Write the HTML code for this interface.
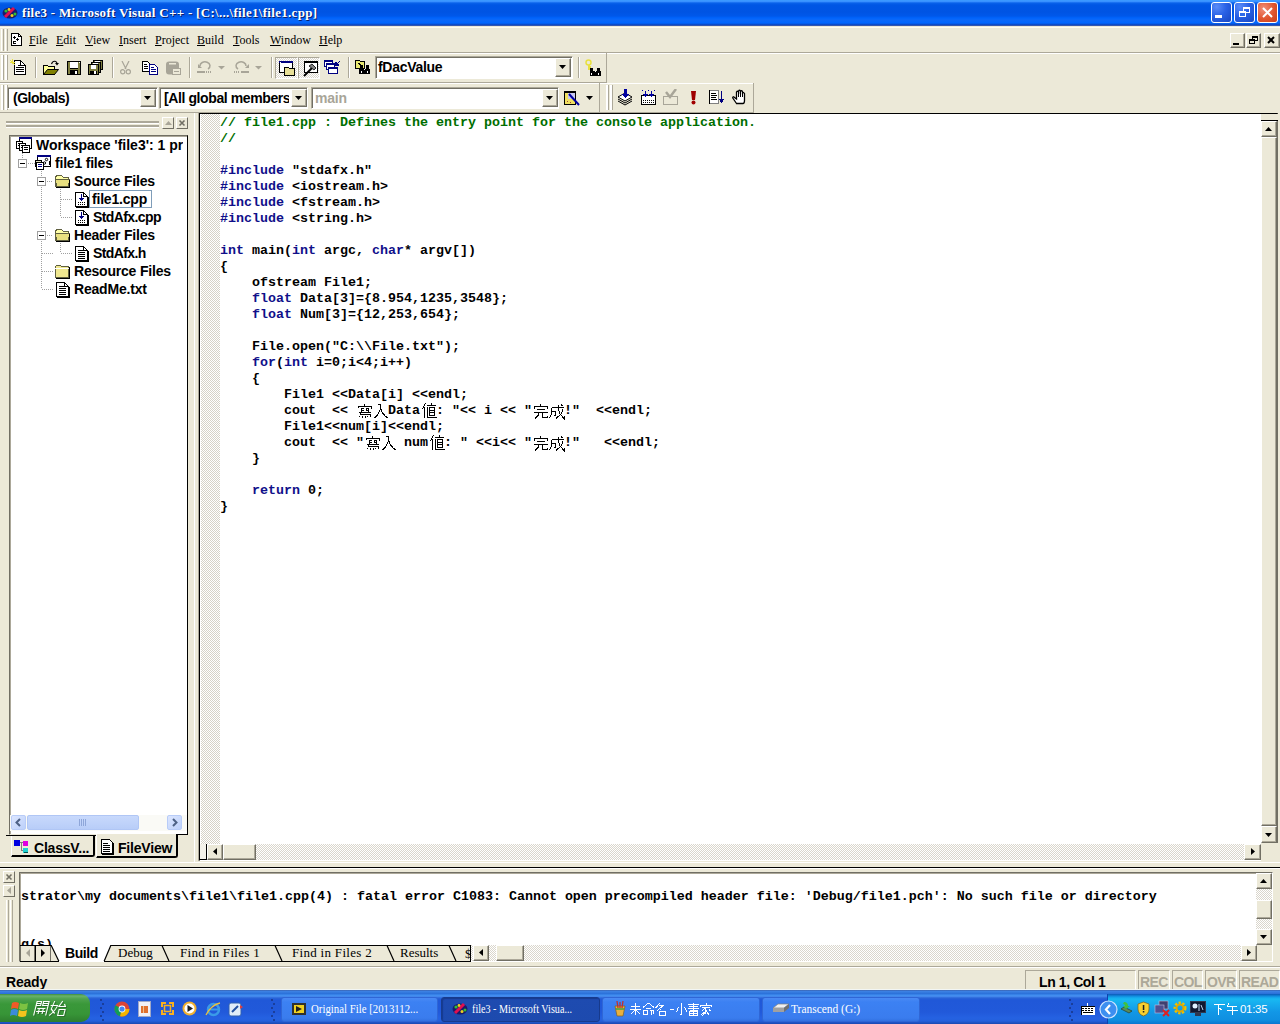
<!DOCTYPE html>
<html><head><meta charset="utf-8">
<style>
*{margin:0;padding:0;box-sizing:border-box}
html,body{width:1280px;height:1024px;overflow:hidden;background:#ECE9D8;font-family:"Liberation Sans",sans-serif}
.a{position:absolute}
.hatchm{background:repeating-conic-gradient(#D6D2C6 0 25%,#fff 0 50%) 0 0/2px 2px}
.hatch{background:repeating-conic-gradient(#DAD6CC 0 25%,#fff 0 50%) 0 0/2px 2px}
.btn3d{background:#ECE9D8;border-style:solid;border-width:1px;border-color:#fff #716F64 #716F64 #fff;box-shadow:inset -1px -1px 0 #ACA899}
.sunk{border-style:solid;border-width:1px;border-color:#ACA899 #fff #fff #ACA899;box-shadow:inset 1px 1px 0 #716F64}
.code{font-family:"Liberation Mono",monospace;font-weight:bold;font-size:13.33px;line-height:16px;white-space:pre;color:#000}
.kw{color:#10108a}
.cm{color:#006e00}
.serif{font-family:"Liberation Serif",serif}
.tb{font-family:"Liberation Sans",sans-serif;font-weight:bold;font-size:14px;white-space:pre}
</style></head><body>

<!-- TITLE BAR -->
<div class="a" style="left:0;top:0;width:1280px;height:26px;background:linear-gradient(#3D9CFF 0,#3890FF 1.5px,#0A62EA 3px,#0056E4 5px,#0054E3 12px,#0058EA 16px,#0064FC 18px,#0C68F8 20px,#0066FF 23px,#0F44B8 25px,#5A6AA8 26px)"></div>
<div class="a" style="left:0;top:26px;width:1280px;height:1px;background:#A0A4B8"></div>
<svg class="a" style="left:2px;top:6px" width="16" height="14" viewBox="0 0 16 14">
<ellipse cx="8" cy="7" rx="7.5" ry="5.5" fill="#1a1a6a"/>
<path d="M3 11 L12 2" stroke="#e01050" stroke-width="3"/>
<circle cx="4" cy="5" r="1.6" fill="#30c030"/><circle cx="7" cy="3.5" r="1.4" fill="#f0d020"/>
<circle cx="10" cy="9.5" r="1.5" fill="#f0d020"/><circle cx="13" cy="8" r="1.5" fill="#30c030"/>
</svg>
<div class="a serif" style="left:22px;top:5px;font-size:13px;line-height:16px;font-weight:bold;color:#fff;white-space:pre;letter-spacing:0.3px;text-shadow:1px 1px 0 #0A1E6A">file3 - Microsoft Visual C++ - [C:\...\file1\file1.cpp]</div>
<div class="a" style="left:1211px;top:2px;width:21px;height:21px;border:1px solid #fff;border-radius:3px;background:radial-gradient(circle at 25% 20%,#5A8CF8,#2A62E6 45%,#1B4BC8 90%)"></div>
<div class="a" style="left:1215px;top:15px;width:7px;height:3px;background:#fff"></div>
<div class="a" style="left:1234px;top:2px;width:21px;height:21px;border:1px solid #fff;border-radius:3px;background:radial-gradient(circle at 25% 20%,#5A8CF8,#2A62E6 45%,#1B4BC8 90%)"></div>
<div class="a" style="left:1243px;top:7px;width:7px;height:6px;border:1px solid #fff;border-top-width:2px"></div>
<div class="a" style="left:1239px;top:11px;width:7px;height:6px;border:1px solid #fff;border-top-width:2px;background:#2F6BEA"></div>
<div class="a" style="left:1257px;top:2px;width:21px;height:21px;border:1px solid #fff;border-radius:3px;background:radial-gradient(circle at 30% 30%,#F0907A,#E0552E 55%,#C8401A)"></div>
<svg class="a" style="left:1257px;top:2px" width="21" height="21"><path d="M6 6 L15 15 M15 6 L6 15" stroke="#fff" stroke-width="2"/></svg>

<!-- MENU BAR -->
<div class="a" style="left:0;top:26px;width:1280px;height:26px;background:#ECE9D8"></div>
<div class="a" style="left:0;top:27px;width:1280px;height:1px;background:#FFFCF0"></div>
<div class="a" style="left:0;top:52px;width:1280px;height:1px;background:#ACA899"></div>
<div class="a" style="left:1px;top:29px;width:3px;height:22px;border-left:1px solid #fff;border-right:1px solid #ACA899"></div>
<div class="a" style="left:5px;top:29px;width:3px;height:22px;border-left:1px solid #fff;border-right:1px solid #ACA899"></div>
<svg class="a" style="left:11px;top:33px" width="12" height="13" viewBox="0 0 12 13" shape-rendering="crispEdges">
<path d="M0.5 0.5 H7.5 L10.5 3.5 V12.5 H0.5 Z" fill="#fff" stroke="#000"/>
<path d="M7.5 0.5 V3.5 H10.5" fill="none" stroke="#000"/>
<rect x="3" y="3" width="1" height="3" fill="#000"/><rect x="2" y="4" width="3" height="1" fill="#000"/>
<rect x="6" y="5" width="1" height="3" fill="#000"/><rect x="5" y="6" width="3" height="1" fill="#000"/>
<rect x="2" y="8" width="3" height="1" fill="#000"/><rect x="2" y="8" width="1" height="3" fill="#000"/><rect x="2" y="10" width="3" height="1" fill="#000"/>
</svg>
<div class="a serif" style="top:32px;font-size:12px;line-height:16px;color:#000;white-space:pre;left:0">
<span class="a" style="top:0;left:29px"><u>F</u>ile</span><span class="a" style="top:0;left:56px"><u>E</u>dit</span><span class="a" style="top:0;left:85px"><u>V</u>iew</span><span class="a" style="top:0;left:119px"><u>I</u>nsert</span><span class="a" style="top:0;left:155px"><u>P</u>roject</span><span class="a" style="top:0;left:197px"><u>B</u>uild</span><span class="a" style="top:0;left:233px"><u>T</u>ools</span><span class="a" style="top:0;left:270px"><u>W</u>indow</span><span class="a" style="top:0;left:319px"><u>H</u>elp</span>
</div>
<div class="a btn3d" style="left:1230px;top:33px;width:15px;height:15px"></div>
<div class="a" style="left:1233px;top:43px;width:6px;height:2px;background:#000"></div>
<div class="a btn3d" style="left:1246px;top:33px;width:15px;height:15px"></div>
<div class="a" style="left:1252px;top:36px;width:6px;height:5px;border:1px solid #000;border-top-width:2px"></div>
<div class="a" style="left:1249px;top:39px;width:6px;height:5px;border:1px solid #000;border-top-width:2px;background:#ECE9D8"></div>
<div class="a btn3d" style="left:1264px;top:33px;width:16px;height:15px"></div>
<svg class="a" style="left:1264px;top:33px" width="16" height="15"><path d="M4 4 L10 10 M10 4 L4 10" stroke="#000" stroke-width="2"/></svg>

<!-- TOOLBARS -->
<div class="a" style="left:0;top:53px;width:1280px;height:60px;background:#ECE9D8"></div>
<div class="a" style="left:0;top:53px;width:1280px;height:1px;background:#fff"></div>
<div class="a" style="left:0;top:82px;width:607px;height:1px;background:#ACA899"></div>
<div class="a" style="left:0;top:83px;width:753px;height:1px;background:#fff"></div>
<div class="a" style="left:0;top:112px;width:754px;height:1px;background:#ACA899"></div>
<!-- TB1 -->
<div class="a" style="left:606px;top:53px;width:1px;height:30px;background:#ACA899"></div>
<div class="a" style="left:1px;top:55px;width:3px;height:25px;border-left:2px solid #fff;border-right:1px solid #ACA899"></div>
<div class="a" style="left:5px;top:55px;width:3px;height:25px;border-left:2px solid #fff;border-right:1px solid #ACA899"></div>
<div class="a" style="left:35px;top:57px;width:2px;height:21px;border-left:1px solid #ACA899;border-right:1px solid #fff"></div>
<div class="a" style="left:112px;top:57px;width:2px;height:21px;border-left:1px solid #ACA899;border-right:1px solid #fff"></div>
<div class="a" style="left:189px;top:57px;width:2px;height:21px;border-left:1px solid #ACA899;border-right:1px solid #fff"></div>
<div class="a" style="left:271px;top:57px;width:2px;height:21px;border-left:1px solid #ACA899;border-right:1px solid #fff"></div>
<div class="a" style="left:348px;top:57px;width:2px;height:21px;border-left:1px solid #ACA899;border-right:1px solid #fff"></div>
<div class="a" style="left:578px;top:57px;width:2px;height:21px;border-left:1px solid #ACA899;border-right:1px solid #fff"></div>
<!-- new -->
<svg class="a" style="left:9px;top:58px" width="18" height="18" viewBox="0 0 18 18" shape-rendering="crispEdges">
<path d="M5.5 2.5 H11.5 L16.5 7.5 V16.5 H5.5 Z" fill="#fff" stroke="#000"/>
<path d="M11.5 2.5 V7.5 H16.5" fill="none" stroke="#000"/>
<rect x="7" y="9" width="8" height="1" fill="#000"/><rect x="7" y="11" width="8" height="1" fill="#000"/><rect x="7" y="13" width="8" height="1" fill="#000"/><rect x="9" y="7" width="2" height="1" fill="#000"/>
<path d="M1 2 L6 7 M3 1 L4 6 M1 5 L6 4" stroke="#E8E040" stroke-width="1"/>
</svg>
<!-- open -->
<svg class="a" style="left:43px;top:60px" width="16" height="16" viewBox="0 0 16 16" shape-rendering="crispEdges">
<path d="M0.5 14.5 V5.5 H4.5 L5.5 6.5 H11.5 V9.5" fill="#FFFF99" stroke="#000"/>
<path d="M0.5 14.5 L4.5 9.5 H15.5 L11.5 14.5 Z" fill="#808000" stroke="#000" shape-rendering="auto"/>
<rect x="0" y="14" width="12" height="1" fill="#000"/>
<path d="M8.5 4 Q9.5 1 12 1.2 Q13.5 1.5 14 3" fill="none" stroke="#000" stroke-width="1.1" shape-rendering="auto"/><path d="M12 3 H16 L14 5.5 Z" fill="#000" shape-rendering="auto"/>
</svg>
<!-- save -->
<svg class="a" style="left:67px;top:61px" width="14" height="14" viewBox="0 0 14 14" shape-rendering="crispEdges">
<rect x="0.5" y="0.5" width="13" height="13" fill="#808040" stroke="#000"/>
<rect x="3" y="1" width="8" height="6" fill="#fff"/><rect x="3" y="7" width="8" height="1" fill="#000"/>
<rect x="3" y="9" width="8" height="5" fill="#000"/><rect x="8" y="10" width="2" height="3" fill="#fff"/><rect x="12" y="1" width="1" height="1" fill="#fff"/>
</svg>
<!-- save all -->
<svg class="a" style="left:88px;top:60px" width="16" height="16" viewBox="0 0 16 16" shape-rendering="crispEdges">
<rect x="5.5" y="0.5" width="9" height="9" fill="#808040" stroke="#000"/><rect x="7" y="1" width="5" height="2" fill="#fff"/>
<rect x="3.5" y="2.5" width="9" height="10" fill="#808040" stroke="#000"/><rect x="5" y="3" width="5" height="2" fill="#fff"/>
<rect x="0.5" y="4.5" width="10" height="10" fill="#808040" stroke="#000"/>
<rect x="3" y="5" width="5" height="4" fill="#fff"/><rect x="2" y="11" width="7" height="4" fill="#000"/><rect x="6" y="11" width="2" height="3" fill="#fff"/>
</svg>
<!-- cut -->
<svg class="a" style="left:120px;top:61px" width="11" height="14" viewBox="0 0 11 14">
<path d="M2 0 L6 8 M9 0 L5 8" stroke="#A8A598" stroke-width="1.2" fill="none"/>
<circle cx="2.7" cy="10.8" r="2.1" fill="none" stroke="#A8A598" stroke-width="1.2"/><circle cx="8.3" cy="10.8" r="2.1" fill="none" stroke="#A8A598" stroke-width="1.2"/>
</svg>
<!-- copy -->
<svg class="a" style="left:142px;top:61px" width="17" height="15" viewBox="0 0 17 15" shape-rendering="crispEdges">
<path d="M0.5 0.5 H5.5 L7.5 2.5 V10.5 H0.5 Z" fill="#fff" stroke="#000"/>
<rect x="2" y="3" width="3" height="1" fill="#000"/><rect x="2" y="5" width="4" height="1" fill="#000"/><rect x="2" y="7" width="4" height="1" fill="#000"/>
<path d="M7.5 3.5 H12.5 L15.5 6.5 V13.5 H7.5 Z" fill="#fff" stroke="#000080"/>
<rect x="9" y="6" width="3" height="1" fill="#000080"/><rect x="9" y="8" width="5" height="1" fill="#000080"/><rect x="9" y="10" width="5" height="1" fill="#000080"/>
</svg>
<!-- paste disabled -->
<svg class="a" style="left:166px;top:61px" width="15" height="14" viewBox="0 0 15 14">
<rect x="0" y="0.5" width="13" height="13" rx="3" fill="#A8A598"/><rect x="3" y="2" width="7" height="1.5" fill="#ECE9D8"/>
<rect x="6.5" y="7.5" width="8" height="6" fill="#ECE9D8" stroke="#A8A598"/><rect x="8" y="10" width="5" height="1" fill="#A8A598"/>
</svg>
<!-- undo/redo -->
<svg class="a" style="left:196px;top:60px" width="68" height="14" viewBox="0 0 68 14">
<path d="M4 6 A5 4 0 1 1 12 9" fill="none" stroke="#A8A598" stroke-width="1.5"/><path d="M2 4 L6 8 L2 8 Z" fill="#A8A598"/>
<rect x="1" y="11" width="8" height="2" fill="#A8A598"/><rect x="10" y="11" width="1" height="2" fill="#A8A598"/><rect x="12" y="11" width="1" height="2" fill="#A8A598"/><rect x="14" y="11" width="1" height="2" fill="#A8A598"/>
<path d="M22 6 H29 L25.5 9.5 Z" fill="#A8A598"/>
<path d="M50 6 A5 4 0 1 0 42 9" fill="none" stroke="#A8A598" stroke-width="1.5"/><path d="M53 4 L49 8 L53 8 Z" fill="#A8A598"/>
<rect x="45" y="11" width="8" height="2" fill="#A8A598"/><rect x="38" y="11" width="1" height="2" fill="#A8A598"/><rect x="40" y="11" width="1" height="2" fill="#A8A598"/><rect x="42" y="11" width="1" height="2" fill="#A8A598"/>
<path d="M59 6 H66 L62.5 9.5 Z" fill="#A8A598"/>
</svg>
<!-- pressed buttons -->
<div class="a hatch" style="left:275px;top:57px;width:23px;height:22px;border:1px solid;border-color:#ACA899 #fff #fff #ACA899"></div>
<div class="a hatch" style="left:298px;top:57px;width:22px;height:22px;border:1px solid;border-color:#ACA899 #fff #fff #ACA899"></div>
<svg class="a" style="left:279px;top:61px" width="17" height="15" viewBox="0 0 17 15" shape-rendering="crispEdges">
<rect x="0.5" y="0.5" width="13" height="11" fill="#fff" stroke="#000"/><rect x="0" y="0" width="14" height="2" fill="#000080"/><rect x="1" y="1" width="1" height="1" fill="#fff"/>
<rect x="4.5" y="2.5" width="0" height="9" stroke="#000"/>
<path d="M5.5 6.5 H9.5 L10.5 7.5 H15.5 V14.5 H5.5 Z" fill="#E8E098" stroke="#000"/>
</svg>
<svg class="a" style="left:303px;top:61px" width="16" height="16" viewBox="0 0 16 16" shape-rendering="crispEdges">
<rect x="1.5" y="0.5" width="13" height="11" fill="#fff" stroke="#000"/><rect x="1" y="0" width="14" height="2" fill="#000"/>
<path d="M1 15 L9 7" stroke="#000" stroke-width="2" shape-rendering="auto"/><path d="M6 5 L9 3 L13 7 L11 9 Z" fill="#808080" stroke="#000" stroke-width="0.8" shape-rendering="auto"/>
</svg>
<!-- window list -->
<svg class="a" style="left:324px;top:60px" width="17" height="15" viewBox="0 0 17 15" shape-rendering="crispEdges">
<rect x="0.5" y="0.5" width="8" height="6" fill="#fff" stroke="#000080"/><rect x="0" y="0" width="9" height="2" fill="#000080"/>
<rect x="2.5" y="3.5" width="8" height="6" fill="#fff" stroke="#000080"/><rect x="2" y="3" width="9" height="2" fill="#000080"/>
<rect x="4.5" y="7.5" width="9" height="6" fill="#fff" stroke="#000080"/><rect x="4" y="7" width="10" height="2" fill="#000080"/>
<path d="M16 1 L12 5 M12 2 V5 H15" stroke="#000080" stroke-width="1.2" fill="none"/>
</svg>
<!-- find in files -->
<svg class="a" style="left:355px;top:60px" width="17" height="15" viewBox="0 0 17 15" shape-rendering="crispEdges">
<path d="M0.5 0.5 H4.5 L5.5 1.5 H9.5 V8.5 H0.5 Z" fill="#E8E870" stroke="#000"/><path d="M3 3 L7 6" stroke="#000"/>
<rect x="5" y="5" width="3" height="8" fill="#000"/><rect x="11" y="5" width="3" height="8" fill="#000"/><rect x="4" y="9" width="11" height="5" fill="#000"/>
<rect x="6" y="11" width="1" height="2" fill="#fff"/><rect x="12" y="11" width="1" height="2" fill="#fff"/><rect x="9" y="9" width="1" height="1" fill="#fff"/>
</svg>
<!-- combo fDacValue -->
<div class="a" style="left:375px;top:56px;width:198px;height:23px;background:#fff;border:1px solid;border-color:#ACA899 #fff #fff #ACA899;box-shadow:inset 1px 1px 0 #716F64"></div>
<div class="a tb" style="left:378px;top:58px;line-height:18px;letter-spacing:-0.3px">fDacValue</div>
<div class="a btn3d" style="left:555px;top:58px;width:16px;height:19px"></div>
<svg class="a" style="left:559px;top:65px" width="8" height="5"><path d="M0 0 H7 L3.5 4 Z" fill="#000"/></svg>
<!-- find -->
<svg class="a" style="left:585px;top:59px" width="17" height="18" viewBox="0 0 17 18" shape-rendering="crispEdges">
<circle cx="3.5" cy="3.5" r="2.5" fill="none" stroke="#E8E040" stroke-width="1.5" shape-rendering="auto"/><path d="M4 6 V11 M4 8 H6 M4 10 H6" stroke="#E8E040" stroke-width="1.2"/>
<rect x="5" y="9" width="3" height="8" fill="#000"/><rect x="12" y="9" width="3" height="8" fill="#000"/><rect x="5" y="12" width="11" height="5" fill="#000"/>
<rect x="6" y="14" width="1" height="2" fill="#fff"/><rect x="13" y="14" width="1" height="2" fill="#fff"/><rect x="10" y="12" width="1" height="1" fill="#fff"/>
</svg>

<!-- TB2 -->
<div class="a" style="left:599px;top:83px;width:1px;height:30px;background:#ACA899"></div>
<div class="a" style="left:753px;top:83px;width:1px;height:30px;background:#ACA899"></div>
<div class="a" style="left:1px;top:85px;width:3px;height:25px;border-left:2px solid #fff;border-right:1px solid #ACA899"></div>
<div class="a" style="left:5px;top:85px;width:3px;height:25px;border-left:2px solid #fff;border-right:1px solid #ACA899"></div>
<div class="a" style="left:606px;top:85px;width:3px;height:25px;border-left:2px solid #fff;border-right:1px solid #ACA899"></div>
<div class="a" style="left:610px;top:85px;width:3px;height:25px;border-left:2px solid #fff;border-right:1px solid #ACA899"></div>
<div class="a" style="left:7px;top:87px;width:151px;height:22px;background:#fff;border:1px solid;border-color:#ACA899 #fff #fff #ACA899;box-shadow:inset 1px 1px 0 #716F64"></div>
<div class="a tb" style="left:13px;top:89px;line-height:18px;letter-spacing:-0.5px">(Globals)</div>
<div class="a btn3d" style="left:140px;top:89px;width:16px;height:18px"></div>
<svg class="a" style="left:144px;top:96px" width="8" height="5"><path d="M0 0 H7 L3.5 4 Z" fill="#000"/></svg>
<div class="a" style="left:159px;top:87px;width:149px;height:22px;background:#fff;border:1px solid;border-color:#ACA899 #fff #fff #ACA899;box-shadow:inset 1px 1px 0 #716F64"></div>
<div class="a tb" style="left:164px;top:89px;line-height:18px;width:125px;height:18px;overflow:hidden;letter-spacing:-0.4px">[All global members</div>
<div class="a btn3d" style="left:291px;top:89px;width:16px;height:18px"></div>
<svg class="a" style="left:295px;top:96px" width="8" height="5"><path d="M0 0 H7 L3.5 4 Z" fill="#000"/></svg>
<div class="a" style="left:311px;top:87px;width:248px;height:22px;background:#fff;border:1px solid;border-color:#ACA899 #fff #fff #ACA899;box-shadow:inset 1px 1px 0 #716F64"></div>
<div class="a tb" style="left:315px;top:89px;line-height:18px;color:#A8A598;letter-spacing:-0.2px">main</div>
<div class="a btn3d" style="left:542px;top:89px;width:16px;height:18px"></div>
<svg class="a" style="left:546px;top:96px" width="8" height="5"><path d="M0 0 H7 L3.5 4 Z" fill="#000"/></svg>
<!-- wizard -->
<svg class="a" style="left:564px;top:90px" width="17" height="16" viewBox="0 0 17 16" shape-rendering="crispEdges">
<rect x="0.5" y="1.5" width="11" height="13" fill="#F0E060" stroke="#000"/><rect x="0" y="1" width="12" height="2" fill="#000"/>
<rect x="4" y="3" width="7" height="6" fill="#C8C8F0"/>
<path d="M5 4 L15 15" stroke="#0000A0" stroke-width="2" shape-rendering="auto"/>
<rect x="3" y="11" width="1" height="1" fill="#A04040"/><rect x="6" y="12" width="1" height="1" fill="#A04040"/>
</svg>
<svg class="a" style="left:586px;top:96px" width="8" height="5"><path d="M0 0 H7 L3.5 4 Z" fill="#000"/></svg>
<!-- build toolbar icons -->
<svg class="a" style="left:617px;top:89px" width="17" height="17" viewBox="0 0 17 17" shape-rendering="crispEdges">
<path d="M1 8 L8 4 L15 8 L8 12 Z" fill="#fff" stroke="#000" shape-rendering="auto"/>
<path d="M1 10 L8 14 L15 10 M1 12 L8 16 L15 12" fill="none" stroke="#000" shape-rendering="auto"/>
<rect x="7" y="0" width="3" height="5" fill="#0000A0"/><path d="M5 5 H12 L8.5 9 Z" fill="#0000A0"/>
</svg>
<svg class="a" style="left:641px;top:90px" width="16" height="15" viewBox="0 0 16 15" shape-rendering="crispEdges">
<rect x="0.5" y="5.5" width="14" height="9" fill="#fff" stroke="#000"/>
<rect x="2" y="10" width="1" height="1" fill="#000"/><rect x="4" y="10" width="1" height="1" fill="#000"/><rect x="6" y="10" width="1" height="1" fill="#000"/><rect x="8" y="10" width="1" height="1" fill="#000"/><rect x="10" y="10" width="1" height="1" fill="#000"/><rect x="12" y="10" width="1" height="1" fill="#000"/>
<rect x="2" y="12" width="1" height="1" fill="#000"/><rect x="4" y="12" width="1" height="1" fill="#000"/><rect x="6" y="12" width="1" height="1" fill="#000"/><rect x="8" y="12" width="1" height="1" fill="#000"/><rect x="10" y="12" width="1" height="1" fill="#000"/><rect x="12" y="12" width="1" height="1" fill="#000"/>
<path d="M2 4 H7 L4.5 7 Z M8 4 H13 L10.5 7 Z" fill="#0000A0"/><rect x="4" y="1" width="1" height="3" fill="#0000A0"/><rect x="10" y="1" width="1" height="3" fill="#0000A0"/>
<rect x="1" y="0" width="1" height="1" fill="#0000A0"/><rect x="7" y="0" width="1" height="1" fill="#0000A0"/><rect x="13" y="0" width="1" height="1" fill="#0000A0"/>
</svg>
<svg class="a" style="left:663px;top:89px" width="16" height="16" viewBox="0 0 16 16">
<rect x="0.5" y="7.5" width="14" height="8" fill="#ECE9D8" stroke="#A8A598"/>
<path d="M3 3 L7 8 L13 0" fill="none" stroke="#A8A598" stroke-width="2.5"/>
</svg>
<svg class="a" style="left:690px;top:90px" width="7" height="15" viewBox="0 0 7 15"><path d="M1 1 H6 L5 10 H2 Z" fill="#A00000"/><circle cx="3.5" cy="12.5" r="2" fill="#A00000"/></svg>
<svg class="a" style="left:709px;top:90px" width="17" height="15" viewBox="0 0 17 15" shape-rendering="crispEdges">
<rect x="0.5" y="0.5" width="9" height="13" fill="#fff" stroke="#808080"/><rect x="0" y="0" width="1" height="14" fill="#000"/>
<rect x="2" y="3" width="5" height="1" fill="#000"/><rect x="2" y="5" width="6" height="1" fill="#000"/><rect x="2" y="7" width="5" height="1" fill="#000"/><rect x="2" y="9" width="6" height="1" fill="#000"/>
<rect x="12" y="1" width="1" height="10" fill="#000080"/><path d="M9.5 9 H15.5 L12.5 13 Z" fill="#000080"/>
</svg>
<svg class="a" style="left:732px;top:89px" width="15" height="16" viewBox="0 0 15 16">
<path d="M4.5 14.5 L0.8 9 Q0.5 8 1.5 7.8 L4.5 10 V3 Q5.5 1.5 6.5 3 V2 Q7.5 0.5 8.5 2 V2.5 Q9.5 1 10.5 2.5 V4 Q11.5 3 12.5 4.5 V11.5 Q12.5 14.5 11 14.5 Z" fill="#fff" stroke="#000" stroke-width="1.3"/>
<path d="M6.5 3 V8 M8.5 2 V8 M10.5 2.5 V8" stroke="#000" stroke-width="1"/>
</svg>

<!-- WORKSPACE -->
<div class="a" style="left:194px;top:113px;width:1px;height:750px;background:#fff"></div>
<div class="a" style="left:6px;top:121px;width:153px;height:3px;border-top:1px solid #ACA899;border-bottom:1px solid #fff"></div>
<div class="a" style="left:6px;top:125px;width:153px;height:3px;border-top:1px solid #ACA899;border-bottom:1px solid #fff"></div>
<div class="a" style="left:6px;top:122px;width:153px;height:1px;background:#ACA899"></div>
<div class="a" style="left:6px;top:126px;width:153px;height:1px;background:#ACA899"></div>
<div class="a" style="left:162px;top:117px;width:12px;height:12px;border:1px solid;border-color:#fff #716F64 #716F64 #fff"></div>
<svg class="a" style="left:165px;top:121px" width="7" height="4"><path d="M0 4 L3.5 0 L7 4 Z" fill="#A8A598"/></svg>
<div class="a" style="left:176px;top:117px;width:12px;height:12px;border:1px solid;border-color:#fff #716F64 #716F64 #fff"></div>
<svg class="a" style="left:176px;top:117px" width="12" height="12"><path d="M3.5 3.5 L8.5 8.5 M8.5 3.5 L3.5 8.5" stroke="#716F64" stroke-width="1.6"/></svg>
<div class="a" style="left:9px;top:135px;width:179px;height:700px;background:#fff;border-style:solid;border-width:1px;border-color:#716F64 #000 #ECE9D8 #716F64;box-shadow:inset 1px 1px 0 #ACA899"></div>
<!-- tree dotted lines -->
<svg class="a" style="left:10px;top:136px" width="170" height="170" shape-rendering="crispEdges">
<g fill="#A0A0A0">
<rect x="12" y="17" width="1" height="1"/><rect x="12" y="19" width="1" height="1"/><rect x="12" y="21" width="1" height="1"/>
<rect x="18" y="27" width="1" height="1"/><rect x="20" y="27" width="1" height="1"/><rect x="22" y="27" width="1" height="1"/><rect x="24" y="27" width="1" height="1"/>
</g>
<path d="M31.5 35 V153" stroke="#A0A0A0" stroke-dasharray="1 1"/>
<path d="M37 45 H43 M37 99 H43 M32 117 H43 M32 135 H43 M32 153 H43" stroke="#A0A0A0" stroke-dasharray="1 1"/>
<path d="M50.5 53 V81 M50.5 107 V117" stroke="#A0A0A0" stroke-dasharray="1 1"/>
<path d="M51 63 H63 M51 81 H63 M51 117 H63" stroke="#A0A0A0" stroke-dasharray="1 1"/>
<rect x="8.5" y="23.5" width="8" height="8" fill="#fff" stroke="#A0A0A0"/><rect x="10" y="27" width="5" height="1" fill="#000"/>
<rect x="27.5" y="41.5" width="8" height="8" fill="#fff" stroke="#A0A0A0"/><rect x="29" y="45" width="5" height="1" fill="#000"/>
<rect x="27.5" y="95.5" width="8" height="8" fill="#fff" stroke="#A0A0A0"/><rect x="29" y="99" width="5" height="1" fill="#000"/>
</svg>
<!-- workspace icon -->
<svg class="a" style="left:16px;top:137px" width="16" height="16" viewBox="0 0 16 16" shape-rendering="crispEdges">
<rect x="3.5" y="0.5" width="12" height="11" fill="#fff" stroke="#000"/><rect x="3" y="0" width="13" height="2" fill="#000080"/>
<rect x="0.5" y="4.5" width="6" height="7" fill="#fff" stroke="#000"/><rect x="2" y="6" width="3" height="1" fill="#000"/><rect x="2" y="8" width="3" height="1" fill="#000"/>
<rect x="3.5" y="6.5" width="6" height="7" fill="#fff" stroke="#000"/><rect x="5" y="8" width="3" height="1" fill="#000"/><rect x="5" y="10" width="3" height="1" fill="#000"/>
<rect x="6.5" y="8.5" width="7" height="7" fill="#fff" stroke="#000"/><rect x="8" y="10" width="4" height="1" fill="#000"/><rect x="8" y="12" width="4" height="1" fill="#000"/>
</svg>
<!-- project icon -->
<svg class="a" style="left:35px;top:155px" width="16" height="15" viewBox="0 0 16 15" shape-rendering="crispEdges">
<rect x="2.5" y="0.5" width="13" height="11" fill="#fff" stroke="#000"/><rect x="2" y="0" width="14" height="2" fill="#000080"/>
<circle cx="11.5" cy="4.5" r="1.2" fill="none" stroke="#000" shape-rendering="auto"/><circle cx="9.5" cy="8" r="1.2" fill="none" stroke="#000" shape-rendering="auto"/><rect x="14" y="6" width="1" height="4" fill="#000"/>
<rect x="0.5" y="5.5" width="6" height="6" fill="#E0E0C0" stroke="#000"/>
<rect x="1.5" y="7.5" width="7" height="7" fill="#fff" stroke="#000"/><rect x="3" y="9" width="4" height="1" fill="#000080"/><rect x="3" y="11" width="4" height="1" fill="#000080"/>
</svg>
<!-- folders -->
<svg class="a" style="left:54px;top:175px" width="17" height="13" viewBox="0 0 17 13" shape-rendering="crispEdges">
<path d="M1.5 1.5 L3.5 0.5 H7.5 L9.5 2.5 H14.5 V11.5 H1.5 Z" fill="#FFFFA8" stroke="#606040"/>
<path d="M1.5 4.5 H15.5 L14.5 11.5 H2.5 Z" fill="#E8E080" stroke="#606040"/><rect x="2" y="12" width="14" height="1" fill="#000"/><rect x="15" y="5" width="1" height="7" fill="#000"/>
</svg>
<svg class="a" style="left:54px;top:229px" width="17" height="13" viewBox="0 0 17 13" shape-rendering="crispEdges">
<path d="M1.5 1.5 L3.5 0.5 H7.5 L9.5 2.5 H14.5 V11.5 H1.5 Z" fill="#FFFFA8" stroke="#606040"/>
<path d="M1.5 4.5 H15.5 L14.5 11.5 H2.5 Z" fill="#E8E080" stroke="#606040"/><rect x="2" y="12" width="14" height="1" fill="#000"/><rect x="15" y="5" width="1" height="7" fill="#000"/>
</svg>
<svg class="a" style="left:54px;top:265px" width="17" height="14" viewBox="0 0 17 14" shape-rendering="crispEdges">
<path d="M1.5 1.5 L2.5 0.5 H6.5 L7.5 1.5 H14.5 V12.5 H1.5 Z" fill="#F0E890" stroke="#606040"/>
<rect x="1" y="3" width="14" height="1" fill="#fff"/><rect x="2" y="13" width="14" height="1" fill="#000"/><rect x="15" y="2" width="1" height="11" fill="#000"/>
</svg>
<!-- doc icons -->
<svg class="a" style="left:75px;top:192px" width="14" height="16" viewBox="0 0 14 16" shape-rendering="crispEdges">
<path d="M0.5 0.5 H8.5 L12.5 4.5 V14.5 H0.5 Z" fill="#fff" stroke="#000"/><path d="M8.5 0.5 V4.5 H12.5" fill="none" stroke="#000"/><rect x="1" y="15" width="13" height="1" fill="#000"/><rect x="13" y="5" width="1" height="10" fill="#000"/>
<rect x="6" y="2" width="1" height="5" fill="#000080"/><path d="M3.5 6 H9.5 L6.5 9 Z" fill="#000080"/>
<rect x="3" y="10" width="1" height="1" fill="#000"/><rect x="5" y="10" width="1" height="1" fill="#000"/><rect x="7" y="10" width="1" height="1" fill="#000"/><rect x="9" y="10" width="1" height="1" fill="#000"/>
<rect x="3" y="12" width="1" height="1" fill="#000"/><rect x="5" y="12" width="1" height="1" fill="#000"/><rect x="7" y="12" width="1" height="1" fill="#000"/><rect x="9" y="12" width="1" height="1" fill="#000"/>
</svg>
<svg class="a" style="left:75px;top:210px" width="14" height="16" viewBox="0 0 14 16" shape-rendering="crispEdges">
<path d="M0.5 0.5 H8.5 L12.5 4.5 V14.5 H0.5 Z" fill="#fff" stroke="#000"/><path d="M8.5 0.5 V4.5 H12.5" fill="none" stroke="#000"/><rect x="1" y="15" width="13" height="1" fill="#000"/><rect x="13" y="5" width="1" height="10" fill="#000"/>
<rect x="6" y="2" width="1" height="5" fill="#000080"/><path d="M3.5 6 H9.5 L6.5 9 Z" fill="#000080"/>
<rect x="3" y="10" width="1" height="1" fill="#000"/><rect x="5" y="10" width="1" height="1" fill="#000"/><rect x="7" y="10" width="1" height="1" fill="#000"/><rect x="9" y="10" width="1" height="1" fill="#000"/>
<rect x="3" y="12" width="1" height="1" fill="#000"/><rect x="5" y="12" width="1" height="1" fill="#000"/><rect x="7" y="12" width="1" height="1" fill="#000"/><rect x="9" y="12" width="1" height="1" fill="#000"/>
</svg>
<svg class="a" style="left:75px;top:246px" width="14" height="16" viewBox="0 0 14 16" shape-rendering="crispEdges">
<path d="M0.5 0.5 H8.5 L12.5 4.5 V14.5 H0.5 Z" fill="#fff" stroke="#000"/><path d="M8.5 0.5 V4.5 H12.5" fill="none" stroke="#000"/><rect x="1" y="15" width="13" height="1" fill="#000"/><rect x="13" y="5" width="1" height="10" fill="#000"/>
<rect x="3" y="4" width="5" height="1" fill="#000"/><rect x="3" y="6" width="7" height="1" fill="#000"/><rect x="3" y="8" width="7" height="1" fill="#000"/><rect x="3" y="10" width="7" height="1" fill="#000"/><rect x="3" y="12" width="7" height="1" fill="#000"/>
</svg>
<svg class="a" style="left:56px;top:282px" width="14" height="16" viewBox="0 0 14 16" shape-rendering="crispEdges">
<path d="M0.5 0.5 H8.5 L12.5 4.5 V14.5 H0.5 Z" fill="#fff" stroke="#000"/><path d="M8.5 0.5 V4.5 H12.5" fill="none" stroke="#000"/><rect x="1" y="15" width="13" height="1" fill="#000"/><rect x="13" y="5" width="1" height="10" fill="#000"/>
<rect x="3" y="4" width="5" height="1" fill="#000"/><rect x="3" y="6" width="7" height="1" fill="#000"/><rect x="3" y="8" width="7" height="1" fill="#000"/><rect x="3" y="10" width="7" height="1" fill="#000"/><rect x="3" y="12" width="7" height="1" fill="#000"/>
</svg>
<!-- tree text -->
<div class="a" style="left:36px;top:136px;width:147px;height:18px;overflow:hidden"><div class="tb" style="line-height:18px;letter-spacing:0px">Workspace 'file3': 1 project</div></div>
<div class="a tb" style="left:55px;top:154px;line-height:18px;letter-spacing:-0.2px">file1 files</div>
<div class="a tb" style="left:74px;top:172px;line-height:18px;letter-spacing:-0.2px">Source Files</div>
<div class="a" style="left:89px;top:190px;width:63px;height:18px;border:1px solid #7F9DB9"></div>
<div class="a tb" style="left:92px;top:190px;line-height:18px;letter-spacing:-0.2px">file1.cpp</div>
<div class="a tb" style="left:93px;top:208px;line-height:18px;letter-spacing:-0.6px">StdAfx.cpp</div>
<div class="a tb" style="left:74px;top:226px;line-height:18px;letter-spacing:-0.2px">Header Files</div>
<div class="a tb" style="left:93px;top:244px;line-height:18px;letter-spacing:-0.6px">StdAfx.h</div>
<div class="a tb" style="left:74px;top:262px;line-height:18px;letter-spacing:-0.2px">Resource Files</div>
<div class="a tb" style="left:74px;top:280px;line-height:18px;letter-spacing:-0.2px">ReadMe.txt</div>
<!-- tree h scrollbar (XP) -->
<div class="a" style="left:10px;top:815px;width:177px;height:16px;background:#FAFAF6"></div>
<div class="a" style="left:11px;top:815px;width:15px;height:15px;border:1px solid #B8CCF8;border-radius:2px;background:linear-gradient(135deg,#DCE6FF,#BCD0FA)"></div>
<svg class="a" style="left:14px;top:818px" width="9" height="9"><path d="M6 1 L2.5 4.5 L6 8" fill="none" stroke="#4D6185" stroke-width="2"/></svg>
<div class="a" style="left:27px;top:815px;width:112px;height:15px;border:1px solid #B0C6F5;border-radius:2px;background:linear-gradient(#C8D9FC,#B8CDF8)"></div>
<svg class="a" style="left:79px;top:819px" width="8" height="7" shape-rendering="crispEdges"><g fill="#8EA6D9"><rect x="0" y="0" width="1" height="7"/><rect x="2" y="0" width="1" height="7"/><rect x="4" y="0" width="1" height="7"/><rect x="6" y="0" width="1" height="7"/></g></svg>
<div class="a" style="left:167px;top:815px;width:15px;height:15px;border:1px solid #B8CCF8;border-radius:2px;background:linear-gradient(135deg,#DCE6FF,#BCD0FA)"></div>
<svg class="a" style="left:170px;top:818px" width="9" height="9"><path d="M3 1 L6.5 4.5 L3 8" fill="none" stroke="#4D6185" stroke-width="2"/></svg>
<div class="a" style="left:177px;top:834px;width:11px;height:1px;background:#000"></div>
<!-- tabs -->
<div class="a" style="left:6px;top:835px;width:90px;height:1px;background:#000"></div>
<div class="a" style="left:11px;top:836px;width:84px;height:21px;border-right:2px solid #000;border-bottom:2px solid #000;border-left:1px solid #fff;border-bottom-right-radius:3px;background:#ECE9D8"></div>
<div class="a" style="left:96px;top:834px;width:82px;height:24px;border-right:2px solid #000;border-bottom:2px solid #000;border-left:1px solid #fff;border-bottom-right-radius:3px;background:#ECE9D8"></div>
<svg class="a" style="left:14px;top:839px" width="16" height="16" viewBox="0 0 16 16" shape-rendering="crispEdges">
<rect x="0" y="1" width="6" height="6" fill="#0000E0"/><rect x="6" y="3" width="3" height="1" fill="#808080"/><rect x="7" y="3" width="1" height="9" fill="#808080"/><rect x="7" y="11" width="3" height="1" fill="#808080"/>
<rect x="9" y="2" width="5" height="5" fill="#E000E0"/><rect x="9" y="9" width="5" height="5" fill="#20D0D0"/><rect x="10" y="13" width="4" height="1" fill="#005050"/>
</svg>
<div class="a tb" style="left:34px;top:839px;line-height:18px;letter-spacing:-0.2px">ClassV...</div>
<svg class="a" style="left:101px;top:839px" width="13" height="16" viewBox="0 0 13 16" shape-rendering="crispEdges">
<path d="M0.5 0.5 H8.5 L11.5 3.5 V14.5 H0.5 Z" fill="#fff" stroke="#000"/><rect x="1" y="15" width="12" height="1" fill="#000"/><rect x="12" y="4" width="1" height="11" fill="#000"/>
<rect x="2" y="4" width="5" height="1" fill="#000"/><rect x="2" y="6" width="7" height="1" fill="#000"/><rect x="2" y="8" width="7" height="1" fill="#000"/><rect x="2" y="10" width="7" height="1" fill="#000"/><rect x="2" y="12" width="7" height="1" fill="#000"/>
</svg>
<div class="a tb" style="left:118px;top:839px;line-height:18px;letter-spacing:-0.2px">FileView</div>

<!-- EDITOR -->
<div class="a" style="left:199px;top:113px;width:1079px;height:748px;background:#fff;border-top:1px solid #000;border-left:1px solid #000;border-right:1px solid #716F64;border-bottom:1px solid #fff"></div>
<div class="a hatchm" style="left:201px;top:114px;width:19px;height:730px"></div>
<div class="a" style="left:198px;top:113px;width:1px;height:748px;background:#ACA899"></div>

<div class="a code" style="left:220px;top:115px"><span class="cm">// file1.cpp : Defines the entry point for the console application.
//</span>

<span class="kw">#include</span> "stdafx.h"
<span class="kw">#include</span> &lt;iostream.h&gt;
<span class="kw">#include</span> &lt;fstream.h&gt;
<span class="kw">#include</span> &lt;string.h&gt;

<span class="kw">int</span> main(<span class="kw">int</span> argc, <span class="kw">char</span>* argv[])
{
    ofstream File1;
    <span class="kw">float</span> Data[3]={8.954,1235,3548};
    <span class="kw">float</span> Num[3]={12,253,654};

    File.open("C:\\File.txt");
    <span class="kw">for</span>(<span class="kw">int</span> i=0;i&lt;4;i++)
    {
        File1 &lt;&lt;Data[i] &lt;&lt;endl;
        cout  &lt;&lt;     Data  : "&lt;&lt; i &lt;&lt; "    !"  &lt;&lt;endl;
        File1&lt;&lt;num[i]&lt;&lt;endl;
        cout  &lt;&lt; "     num  : " &lt;&lt;i&lt;&lt; "    !"   &lt;&lt;endl;
    }

    <span class="kw">return</span> 0;
}</div>

<!-- EDITOR SCROLLBARS -->
<div class="a" style="left:1261px;top:114px;width:17px;height:7px;background:#ECE9D8;border-bottom:1px solid #000"></div>
<div class="a btn3d" style="left:1261px;top:121px;width:16px;height:16px"></div>
<svg class="a" style="left:1265px;top:127px" width="8" height="5"><path d="M0 4 H7 L3.5 0 Z" fill="#000"/></svg>
<div class="a btn3d" style="left:1261px;top:137px;width:16px;height:689px"></div>
<div class="a btn3d" style="left:1261px;top:826px;width:16px;height:17px"></div>
<svg class="a" style="left:1265px;top:833px" width="8" height="5"><path d="M0 0 H7 L3.5 4 Z" fill="#000"/></svg>
<div class="a hatch" style="left:200px;top:844px;width:1061px;height:16px"></div>
<div class="a" style="left:200px;top:844px;width:6px;height:16px;background:#F4F2EA;border-bottom:1px solid #000"></div>
<div class="a" style="left:1261px;top:843px;width:17px;height:18px;background:#ECE9D8"></div>
<div class="a" style="left:206px;top:844px;width:1px;height:16px;background:#000"></div>
<div class="a btn3d" style="left:207px;top:844px;width:16px;height:16px"></div>
<svg class="a" style="left:213px;top:848px" width="5" height="8"><path d="M4 0 V7 L0 3.5 Z" fill="#000"/></svg>
<div class="a btn3d" style="left:223px;top:844px;width:33px;height:16px"></div>
<div class="a btn3d" style="left:1244px;top:844px;width:17px;height:16px"></div>
<svg class="a" style="left:1251px;top:848px" width="5" height="8"><path d="M0 0 V7 L4 3.5 Z" fill="#000"/></svg>

<!-- CJK glyphs -->
<svg class="a" style="left:0;top:0" width="1280" height="1024" viewBox="0 0 1280 1024" shape-rendering="crispEdges">
<defs>
<g id="gx" fill="none" stroke="#000" stroke-width="1">
<path d="M7.5 0 V2 M1.5 4 V2.5 H14.5 V4.5 M4.5 3.5 V8 M4 4.5 H6.5 M4 6.5 H6.5 M9.5 3.5 V6.5 M9 4.5 H11.5 V8 M9 6.5 H11.5 M2 8.5 H13.5 M3.5 8.5 V11 M3 10.5 H13.5 V12.5 L12.5 13.5 M2.5 12 L1.5 13.5 M5.5 12 V13.5 M8 12 V13.5 M10.5 12 L11.5 13.5"/>
</g>
<g id="gr" fill="none" stroke="#000" stroke-width="1">
<path d="M4.5 0.5 H7.5 V4 M7.5 4 Q6.5 10 1.5 14 M7.5 4 Q9.5 11 15 14"/>
</g>
<g id="gz" fill="none" stroke="#000" stroke-width="1">
<path d="M4.5 0 L1.5 6 M3.5 3.5 V15 M6 2.5 H15 M10.5 0 V2.5 M8.5 4.5 H13.5 V12.5 H8.5 Z M8.5 7 H13.5 M8.5 9.5 H13.5 M6.5 4 V14.5 H15.5"/>
</g>
<g id="gw" fill="none" stroke="#000" stroke-width="1">
<path d="M7.5 0 V2 M1.5 4.5 V2.5 H14.5 V4.5 M4 5.5 H11.5 M1 8.5 H15 M5.5 8.5 V11 L2 14.5 M9.5 8.5 V13.5 H14.5 V12"/>
</g>
<g id="gc" fill="none" stroke="#000" stroke-width="1">
<path d="M2.5 3.5 V10 L0.5 14 M2.5 3.5 H15 M9.5 0.5 V5 L11 10 L15 14.5 V12 M12 0.5 L13.5 2 M2.5 7.5 H6.5 V11 L5.5 12 M14 5.5 L12 10 L7 14.5"/>
</g>
</defs>
<use href="#gx" x="357" y="404"/><use href="#gr" x="373" y="404"/><use href="#gz" x="421" y="403"/>
<use href="#gw" x="533" y="404"/><use href="#gc" x="549" y="404"/>
<use href="#gx" x="365" y="436"/><use href="#gr" x="381" y="436"/><use href="#gz" x="429" y="435"/>
<use href="#gw" x="533" y="436"/><use href="#gc" x="549" y="436"/>
</svg>
<!-- OUTPUT -->
<div class="a" style="left:0;top:862px;width:1280px;height:1px;background:#fff"></div>
<div class="a" style="left:0;top:867px;width:1280px;height:1px;background:#000"></div>
<div class="a" style="left:0;top:868px;width:1280px;height:1px;background:#fff"></div>
<div class="a" style="left:3px;top:871px;width:12px;height:12px;border:1px solid;border-color:#fff #716F64 #716F64 #fff"></div>
<svg class="a" style="left:3px;top:871px" width="12" height="12"><path d="M3.5 3.5 L8.5 8.5 M8.5 3.5 L3.5 8.5" stroke="#716F64" stroke-width="1.6"/></svg>
<div class="a" style="left:3px;top:885px;width:12px;height:12px;border:1px solid;border-color:#fff #716F64 #716F64 #fff"></div>
<svg class="a" style="left:7px;top:887px" width="4" height="7"><path d="M4 0 V7 L0 3.5 Z" fill="#A8A598"/></svg>
<div class="a" style="left:6px;top:900px;width:3px;height:62px;border-left:1px solid #fff;border-right:1px solid #ACA899"></div>
<div class="a" style="left:10px;top:900px;width:3px;height:62px;border-left:1px solid #fff;border-right:1px solid #ACA899"></div>
<div class="a" style="left:19px;top:872px;width:1254px;height:90px;background:#fff;border-style:solid;border-width:1px;border-color:#716F64 #fff #fff #716F64;box-shadow:inset 1px 1px 0 #ACA899"></div>
<div class="a" style="left:21px;top:873px;width:1235px;height:72px;overflow:hidden">
<div class="code" style="position:absolute;left:0;top:16px">strator\my documents\file1\file1.cpp(4) : fatal error C1083: Cannot open precompiled header file: 'Debug/file1.pch': No such file or directory


g(s)</div></div>
<!-- output v scrollbar -->
<div class="a hatch" style="left:1256px;top:873px;width:16px;height:72px"></div>
<div class="a btn3d" style="left:1256px;top:873px;width:16px;height:16px"></div>
<svg class="a" style="left:1260px;top:879px" width="8" height="5"><path d="M0 4 H7 L3.5 0 Z" fill="#000"/></svg>
<div class="a btn3d" style="left:1256px;top:900px;width:16px;height:19px"></div>
<div class="a btn3d" style="left:1256px;top:929px;width:16px;height:16px"></div>
<svg class="a" style="left:1260px;top:935px" width="8" height="5"><path d="M0 0 H7 L3.5 4 Z" fill="#000"/></svg>
<div class="a" style="left:1256px;top:945px;width:16px;height:16px;background:#ECE9D8"></div>
<!-- output tabs & h scroll -->
<div class="a hatch" style="left:20px;top:945px;width:1236px;height:16px"></div>
<svg class="a" style="left:20px;top:945px" width="452" height="17" shape-rendering="crispEdges">
<rect x="0" y="0" width="450" height="16" fill="#ECE9D8"/>
<rect x="0" y="0" width="450" height="1" fill="#000"/>
<rect x="0" y="16" width="450" height="1" fill="#000"/>
<rect x="0" y="1" width="15" height="15" fill="#ECE9D8"/><rect x="0" y="1" width="1" height="15" fill="#716F64"/><rect x="14" y="1" width="1" height="15" fill="#716F64"/>
<path d="M10 4 V12 L6 8 Z" fill="#A8A598" shape-rendering="auto"/>
<rect x="15" y="1" width="1" height="15" fill="#000"/>
<rect x="16" y="1" width="15" height="15" fill="#ECE9D8"/><rect x="30" y="1" width="1" height="15" fill="#716F64"/>
<path d="M21 4 V12 L25 8 Z" fill="#000" shape-rendering="auto"/>
<g shape-rendering="auto">
<path d="M31 0 L39 16.5 L84 16.5 L91 0 Z" fill="#fff"/>
<path d="M31 0 L39 16.5 M91 0 L84 16.5" stroke="#000" stroke-width="1.2" fill="none"/>
<path d="M142 0.5 L149 16 M255 0.5 L262 16 M367 0.5 L374 16 M429 0.5 L436 16" stroke="#000" stroke-width="1.2" fill="none"/>
</g>
<rect x="39" y="16" width="45" height="1" fill="#fff"/>
<rect x="450" y="0" width="1" height="17" fill="#000"/>
</svg>
<div class="a tb" style="left:65px;top:944px;line-height:18px;letter-spacing:-0.4px">Build</div>
<div class="a serif" style="left:118px;top:945px;font-size:13px;line-height:16px;white-space:pre">Debug</div>
<div class="a serif" style="left:180px;top:945px;font-size:13px;line-height:16px;white-space:pre;letter-spacing:0.3px">Find in Files 1</div>
<div class="a serif" style="left:292px;top:945px;font-size:13px;line-height:16px;white-space:pre;letter-spacing:0.3px">Find in Files 2</div>
<div class="a serif" style="left:400px;top:945px;font-size:13px;line-height:16px;white-space:pre">Results</div>
<div class="a" style="left:465px;top:946px;width:5px;height:15px;overflow:hidden"><div class="serif" style="font-size:13px;line-height:15px">$</div></div>
<div class="a btn3d" style="left:473px;top:945px;width:16px;height:16px"></div>
<svg class="a" style="left:479px;top:949px" width="5" height="8"><path d="M4 0 V7 L0 3.5 Z" fill="#000"/></svg>
<div class="a btn3d" style="left:496px;top:945px;width:28px;height:16px"></div>
<div class="a btn3d" style="left:1241px;top:945px;width:16px;height:16px"></div>
<svg class="a" style="left:1247px;top:949px" width="5" height="8"><path d="M0 0 V7 L4 3.5 Z" fill="#000"/></svg>

<!-- STATUS BAR -->
<div class="a" style="left:0;top:966px;width:1280px;height:1px;background:#ACA899"></div>
<div class="a" style="left:0;top:967px;width:1280px;height:1px;background:#fff"></div>
<div class="a tb" style="left:6px;top:973px;line-height:18px;letter-spacing:-0.2px">Ready</div>
<div class="a" style="left:1025px;top:970px;width:111px;height:20px;border:1px solid;border-color:#ACA899 #fff #fff #ACA899"></div>
<div class="a tb" style="left:1039px;top:973px;line-height:18px;letter-spacing:-0.4px">Ln 1, Col 1</div>
<div class="a" style="left:1138px;top:970px;width:32px;height:20px;border:1px solid;border-color:#ACA899 #fff #fff #ACA899"></div>
<div class="a" style="left:1172px;top:970px;width:31px;height:20px;border:1px solid;border-color:#ACA899 #fff #fff #ACA899"></div>
<div class="a" style="left:1205px;top:970px;width:32px;height:20px;border:1px solid;border-color:#ACA899 #fff #fff #ACA899"></div>
<div class="a" style="left:1239px;top:970px;width:41px;height:20px;border:1px solid;border-color:#ACA899 #fff #fff #ACA899"></div>
<div class="a tb" style="left:1140px;top:973px;line-height:18px;color:#ACA899;letter-spacing:-0.6px">REC</div>
<div class="a tb" style="left:1174px;top:973px;line-height:18px;color:#ACA899;letter-spacing:-0.6px">COL</div>
<div class="a tb" style="left:1207px;top:973px;line-height:18px;color:#ACA899;letter-spacing:-0.6px">OVR</div>
<div class="a tb" style="left:1241px;top:973px;line-height:18px;color:#ACA899;letter-spacing:-0.6px">READ</div>

<!-- TASKBAR -->
<div class="a" style="left:0;top:989px;width:1280px;height:1px;background:#F2F6F4"></div>
<div class="a" style="left:0;top:990px;width:1280px;height:34px;background:linear-gradient(#3A5FA8 0,#3D82E4 1.2px,#2C72DA 3.5px,#3A88EC 5px,#4A92F2 6px,#2A64D8 8px,#2058D8 10px,#2159DA 22px,#2562E2 28px,#2460DC 31px,#1A48B0 34px)"></div>
<div class="a" style="left:0;top:994px;width:90px;height:28px;border-radius:0 9px 9px 0;background:linear-gradient(#3E8E3E 0,#6AB26A 2px,#4DA24D 5px,#3A983A 10px,#379537 20px,#2E7E2E 28px)"></div>
<svg class="a" style="left:10px;top:1001px" width="20" height="18" viewBox="0 0 20 18">
<path d="M2 2 Q5 0 9 2 L8 8 Q4 6 1 8 Z" fill="#F05A28"/><path d="M10 2 Q14 4 18 2 L17 8 Q13 10 9 8 Z" fill="#7DC242"/>
<path d="M1 9 Q4 7 8 9 L7 15 Q3 13 0 15 Z" fill="#3C8BDA"/><path d="M9 9 Q13 11 17 9 L16 15 Q12 17 8 15 Z" fill="#F5C31D"/>
</svg>
<svg class="a" style="left:33px;top:1000px" width="40" height="18" viewBox="0 0 40 18">
<g transform="translate(3 1) skewX(-14)" fill="none" stroke="#2A5A2A" stroke-width="1.2" opacity="0.6"><path d="M2.5 1.5 H7 V5.5 H2.5 Z M2.5 3.5 H7 M9 1.5 H14.5 V5.5 H9 Z M9 3.5 H14.5 M2.5 1.5 V15.5 M14.5 5 V15.5 M4.5 8.5 H12.5 M4 11.5 H13 M6.5 8 V14 M10.5 8 V14"/><path d="M20 1 L18.5 9 L23 13.5 M17 5.5 H24 Q23 11 18 15.5 M28 1 L25.5 6.5 H32 L30.5 4 M26.5 9.5 H32.5 V15.5 H26.5 Z"/></g>
<g transform="translate(2 0) skewX(-14)" fill="none" stroke="#fff" stroke-width="1.1"><path d="M2.5 1.5 H7 V5.5 H2.5 Z M2.5 3.5 H7 M9 1.5 H14.5 V5.5 H9 Z M9 3.5 H14.5 M2.5 1.5 V15.5 M14.5 5 V15.5 M4.5 8.5 H12.5 M4 11.5 H13 M6.5 8 V14 M10.5 8 V14"/><path d="M20 1 L18.5 9 L23 13.5 M17 5.5 H24 Q23 11 18 15.5 M28 1 L25.5 6.5 H32 L30.5 4 M26.5 9.5 H32.5 V15.5 H26.5 Z"/></g>
</svg>
<!-- quick launch dots -->
<svg class="a" style="left:100px;top:998px" width="4" height="24"><g fill="#1A3E9A"><rect x="0" y="1" width="2" height="2"/><rect x="2" y="5" width="2" height="2"/><rect x="0" y="9" width="2" height="2"/><rect x="2" y="13" width="2" height="2"/><rect x="0" y="17" width="2" height="2"/><rect x="2" y="21" width="2" height="2"/></g></svg>
<svg class="a" style="left:271px;top:998px" width="4" height="24"><g fill="#1A3E9A"><rect x="0" y="1" width="2" height="2"/><rect x="2" y="5" width="2" height="2"/><rect x="0" y="9" width="2" height="2"/><rect x="2" y="13" width="2" height="2"/><rect x="0" y="17" width="2" height="2"/><rect x="2" y="21" width="2" height="2"/></g></svg>
<svg class="a" style="left:1069px;top:998px" width="4" height="24"><g fill="#1A3E9A"><rect x="0" y="1" width="2" height="2"/><rect x="2" y="5" width="2" height="2"/><rect x="0" y="9" width="2" height="2"/><rect x="2" y="13" width="2" height="2"/><rect x="0" y="17" width="2" height="2"/><rect x="2" y="21" width="2" height="2"/></g></svg>
<!-- ql icons -->
<svg class="a" style="left:114px;top:1001px" width="16" height="16" viewBox="0 0 16 16">
<circle cx="8" cy="8" r="7.5" fill="#DB4437"/><path d="M8 8 L1.5 4.2 A7.5 7.5 0 0 0 6 15.2 Z" fill="#0F9D58"/><path d="M8 8 L6 15.2 A7.5 7.5 0 0 0 15.5 8 Z" fill="#F4B400"/><circle cx="8" cy="8" r="3.4" fill="#fff"/><circle cx="8" cy="8" r="2.6" fill="#4285F4"/>
</svg>
<svg class="a" style="left:138px;top:1001px" width="13" height="16" viewBox="0 0 13 16"><rect x="0.5" y="0.5" width="12" height="15" fill="#F0F0F8" stroke="#A0A8C8"/><rect x="3" y="5" width="7" height="7" fill="#E07030"/><rect x="5" y="5" width="1" height="7" fill="#F0C090"/></svg>
<svg class="a" style="left:160px;top:1001px" width="15" height="15" viewBox="0 0 15 15"><path d="M1 1 H6 V3 H3 V6 H1 Z M9 1 H14 V6 H12 V3 H9 Z M1 9 H3 V12 H6 V14 H1 Z M12 9 H14 V14 H9 V12 H12 Z" fill="#F8B020"/><rect x="4.5" y="4.5" width="6" height="6" fill="none" stroke="#F8B020" stroke-width="1.5"/></svg>
<svg class="a" style="left:182px;top:1001px" width="15" height="15" viewBox="0 0 15 15"><circle cx="7.5" cy="7.5" r="7" fill="#F0B030"/><circle cx="7.5" cy="7.5" r="5" fill="#fff"/><path d="M5.5 4 L11 7.5 L5.5 11 Z" fill="#202020"/></svg>
<svg class="a" style="left:205px;top:1001px" width="16" height="16" viewBox="0 0 16 16"><circle cx="8.5" cy="8.5" r="5.5" fill="none" stroke="#3A9BE8" stroke-width="2.5"/><path d="M4 8.5 H13" stroke="#3A9BE8" stroke-width="2"/><path d="M1 14 Q6 4 15 2" fill="none" stroke="#E8C040" stroke-width="1.3"/></svg>
<svg class="a" style="left:228px;top:1001px" width="16" height="16" viewBox="0 0 16 16"><rect x="1" y="2" width="12" height="13" rx="2" fill="#E0ECF8" stroke="#3060B0"/><path d="M4 11 L10 5" stroke="#2050A0" stroke-width="2"/><path d="M12 4 L15 6 L12 8" fill="#E04040"/></svg>
<!-- task buttons -->
<div class="a" style="left:281px;top:997px;width:157px;height:25px;border-radius:3px;background:linear-gradient(#4A8AF4 0,#3C81F3 4px,#3A7CEE 20px,#2D6AD8 25px);border:1px solid #2F66D6"></div>
<div class="a" style="left:441px;top:997px;width:159px;height:25px;border-radius:3px;background:linear-gradient(#1E4BB0 0,#1D4AAE 25px);border:1px solid #173A8C;box-shadow:inset 1px 1px 1px #163A90"></div>
<div class="a" style="left:602px;top:997px;width:158px;height:25px;border-radius:3px;background:linear-gradient(#4A8AF4 0,#3C81F3 4px,#3A7CEE 20px,#2D6AD8 25px);border:1px solid #2F66D6"></div>
<div class="a" style="left:762px;top:997px;width:158px;height:25px;border-radius:3px;background:linear-gradient(#4A8AF4 0,#3C81F3 4px,#3A7CEE 20px,#2D6AD8 25px);border:1px solid #2F66D6"></div>
<svg class="a" style="left:291px;top:1001px" width="16" height="16" viewBox="0 0 16 16"><rect x="1" y="2" width="14" height="12" fill="#303030"/><rect x="3" y="4" width="10" height="8" fill="#F0D020"/><path d="M5 5 L11 8 L5 11 Z" fill="#202020"/></svg>
<svg class="a" style="left:452px;top:1002px" width="16" height="14" viewBox="0 0 16 14">
<ellipse cx="8" cy="7" rx="7.5" ry="5.5" fill="#1a1a6a"/><path d="M3 11 L12 2" stroke="#e01050" stroke-width="3"/>
<circle cx="4" cy="5" r="1.6" fill="#30c030"/><circle cx="7" cy="3.5" r="1.4" fill="#f0d020"/><circle cx="10" cy="9.5" r="1.5" fill="#f0d020"/><circle cx="13" cy="8" r="1.5" fill="#30c030"/>
</svg>
<svg class="a" style="left:612px;top:1000px" width="16" height="17" viewBox="0 0 16 17"><path d="M3 6 L5 16 H11 L13 6 Z" fill="#E8B040" stroke="#806020" stroke-width="0.7"/><path d="M5 1 L6 8 M8 2 L8 8 M11 1 L10 8" stroke="#C03030" stroke-width="1.3"/><path d="M4 9 H12" stroke="#40A040" stroke-width="1.5"/></svg>
<svg class="a" style="left:772px;top:1003px" width="18" height="11" viewBox="0 0 18 11"><path d="M1 5 L6 1 H17 L12 5 Z" fill="#F0F0F0" stroke="#808080" stroke-width="0.7"/><path d="M1 5 H12 V9 H1 Z" fill="#A0A0A0"/><path d="M12 5 L17 1 V5 L12 9 Z" fill="#707070"/></svg>
<div class="a serif" style="left:311px;top:1000px;font-size:13px;line-height:18px;color:#fff;white-space:pre;transform:scaleX(0.83);transform-origin:0 0">Original File [2013112...</div>
<div class="a serif" style="left:472px;top:1000px;font-size:13px;line-height:18px;color:#fff;white-space:pre;transform:scaleX(0.78);transform-origin:0 0">file3 - Microsoft Visua...</div>
<svg class="a" style="left:630px;top:1003px" width="84" height="13" viewBox="0 0 84 13" fill="none" stroke="#fff" stroke-width="1" shape-rendering="crispEdges">
<path d="M1 3.5 H10 M0 6.5 H11 M5.5 0 V12 M5.5 6.5 L1 11 M5.5 6.5 L10 11"/>
<path d="M18.5 0 L13 4.5 M18.5 0 L24 4.5 M16 5.5 H21 M13.5 7.5 H17.5 V11.5 H13.5 Z M19.5 7.5 H23.5 V10.5 M21.5 7.5 V12"/>
<path d="M30 0 L25.5 5 M28.5 2 H33.5 L27 8 M29 5 L31 7 M29.5 8.5 H35.5 V12 H29.5 Z"/>
<path d="M40 6.5 H44"/>
<path d="M51.5 0 V11.5 L50 12 M48.5 4 L46.5 9 M54.5 4 L57 9"/>
<path d="M58 1.5 H69 M59 3.5 H68 M63.5 0 V8 M58 5.5 H69 M59.5 7.5 H67.5 M59.5 8.5 H67.5 V12.5 H59.5 Z M59.5 10.5 H67.5 M63.5 8.5 V12.5"/>
<path d="M76 0 V1.5 M70.5 3.5 V2 H81.5 V3.5 M72 4.5 H80 M76 4.5 L72 8 M75 6 L79 12 M79 6.5 L81.5 8.5 M76 8 L71 12 M76 9.5 L72.5 12.5"/>
</svg>
<div class="a serif" style="left:791px;top:1000px;font-size:13px;line-height:18px;color:#fff;white-space:pre;transform:scaleX(0.88);transform-origin:0 0">Transcend (G:)</div>
<!-- tray -->
<div class="a" style="left:1107px;top:994px;width:173px;height:30px;border-left:1px solid #1042AF;background:linear-gradient(#0C59B9 0,#139EE9 3px,#18B9F2 5px,#1297E6 18px,#0F8FE0 26px,#0B76D0 30px)"></div>
<svg class="a" style="left:1081px;top:1003px" width="14" height="12" viewBox="0 0 14 12" shape-rendering="crispEdges"><rect x="0" y="3" width="14" height="9" fill="#fff" stroke="#000" stroke-width="1"/><g fill="#000"><rect x="1" y="5" width="2" height="1"/><rect x="4" y="5" width="2" height="1"/><rect x="7" y="5" width="2" height="1"/><rect x="10" y="5" width="2" height="1"/><rect x="1" y="7" width="2" height="1"/><rect x="4" y="7" width="2" height="1"/><rect x="7" y="7" width="2" height="1"/><rect x="10" y="7" width="2" height="1"/><rect x="2" y="9" width="10" height="1"/></g><rect x="6" y="0" width="1" height="3" fill="#fff"/></svg>
<svg class="a" style="left:1099px;top:1000px" width="19" height="19" viewBox="0 0 19 19"><circle cx="9.5" cy="9.5" r="8.5" fill="#3D8FF0" stroke="#CFE4FF" stroke-width="1.2"/><path d="M11 5 L7 9.5 L11 14" fill="none" stroke="#fff" stroke-width="2.2"/></svg>
<svg class="a" style="left:1119px;top:1001px" width="14" height="16" viewBox="0 0 14 16"><path d="M2 8 L10 12 L13 10 L5 6 Z" fill="#5A8A5A" stroke="#203020" stroke-width="0.6"/><path d="M5 1 Q9 1 9 5 L11 5 L7 8 L4 5 L6 5 Q6 3 4 3 Z" fill="#40C040"/></svg>
<svg class="a" style="left:1137px;top:1001px" width="13" height="16" viewBox="0 0 13 16"><path d="M6.5 1 L12 3 V8 Q12 13 6.5 15 Q1 13 1 8 V3 Z" fill="#F8D030" stroke="#806010" stroke-width="0.7"/><rect x="5.8" y="4" width="1.5" height="5" fill="#202020"/><rect x="5.8" y="10" width="1.5" height="1.5" fill="#202020"/></svg>
<svg class="a" style="left:1154px;top:1000px" width="17" height="18" viewBox="0 0 17 18"><rect x="5" y="1" width="9" height="8" fill="#404070" stroke="#C0C0E0" stroke-width="0.6"/><rect x="1" y="5" width="9" height="8" fill="#505090" stroke="#C0C0E0" stroke-width="0.6"/><path d="M9 10 L15 16 M15 10 L9 16" stroke="#E02020" stroke-width="2"/></svg>
<svg class="a" style="left:1173px;top:1001px" width="14" height="14" viewBox="0 0 14 14"><circle cx="7" cy="7" r="5" fill="none" stroke="#F0C000" stroke-width="3" stroke-dasharray="2.2 1.4"/><circle cx="7" cy="7" r="3.5" fill="none" stroke="#E0A800" stroke-width="2"/></svg>
<svg class="a" style="left:1190px;top:1001px" width="16" height="15" viewBox="0 0 16 15"><rect x="0.5" y="0.5" width="15" height="11" fill="#101830" stroke="#303850"/><circle cx="5" cy="5" r="2.5" fill="#E0F0FF"/><path d="M9 3 V10 M11 4 L13 9" stroke="#C0D8F0" stroke-width="1"/><rect x="5" y="12" width="6" height="3" fill="#303850"/></svg>
<svg class="a" style="left:1213px;top:1003px" width="26" height="13" viewBox="0 0 26 13" fill="none" stroke="#fff" stroke-width="1" shape-rendering="crispEdges">
<path d="M0.5 1.5 H11.5 M5.5 1.5 V12 M6 5 L9 7"/>
<path d="M16 0.5 L14 4 M15 3.5 H23.5 M13.5 7.5 H24.5 M19.5 3.5 V12"/>
</svg>
<div class="a" style="left:1240px;top:1001px;font-family:'Liberation Sans',sans-serif;font-size:11.5px;line-height:16px;color:#fff;white-space:pre;letter-spacing:-0.3px">01:35</div>
</body></html>
